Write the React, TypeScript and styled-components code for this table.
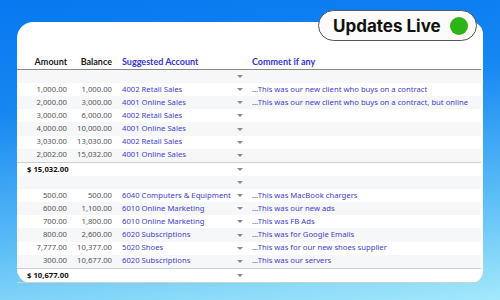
import React from "react";
import styled, { createGlobalStyle } from "styled-components";

const Global = createGlobalStyle`
  html, body { margin: 0; padding: 0; }
  body { width: 500px; height: 300px; overflow: hidden; }
  #root { width: 500px; height: 300px; }
`;

const Page = styled.div`
  position: relative;
  width: 500px;
  height: 300px;
  box-sizing: border-box;
  padding: 22px 17px 17px 17px;
  background: linear-gradient(174deg, #0878f0 0%, #1587f2 32%, #5fc0f7 72%, #a3e9fb 100%);
  font-family: "Noto Sans", "Open Sans", sans-serif;
`;

const Card = styled.div`
  width: 466px;
  height: 261px;
  box-sizing: border-box;
  background: #ffffff;
  border-radius: 16px 12px 12px 14px;
  padding-top: 35px;
  display: flex;
  flex-direction: column;
`;

const Badge = styled.div`
  position: absolute;
  top: 10px;
  left: 318px;
  width: 159px;
  height: 31px;
  box-sizing: border-box;
  border: 1px solid #555;
  border-radius: 16px;
  background: #fbfbfb;
  display: flex;
  align-items: center;
  justify-content: space-between;
  padding: 0 8px 0 14px;
  font-family: "Inter", "Lato", sans-serif;
  font-weight: 700;
  font-size: 17px;
  color: #111;
`;

const Dot = styled.span`
  width: 18px;
  height: 18px;
  border-radius: 50%;
  background: #2eb315;
`;

const Row = styled.div<{ $shade?: boolean; $head?: boolean; $total?: boolean }>`
  display: grid;
  grid-template-columns: 50px 45px 134px 1fr;
  align-items: center;
  height: ${(p) => (p.$head ? "12px" : "13.2px")};
  margin-right: 2px;
  background: ${(p) => (p.$shade ? "#f6f7f9" : "transparent")};
  border-bottom: ${(p) => (p.$head ? "1.5px solid #8a8a8a" : "none")};
  border-top: ${(p) => (p.$total ? "1px solid #cfcfcf" : "none")};
  font-size: 7.7px;
  line-height: 1;
  white-space: nowrap;
`;

const BottomLine = styled.div`
  margin-right: 2px;
  border-top: 1px solid #cfcfcf;
`;

const HeadCell = styled.div<{ $blue?: boolean; $right?: boolean; $pad?: number }>`
  font-family: "Lato", "Open Sans", sans-serif;
  font-weight: 700;
  font-size: 9px;
  color: ${(p) => (p.$blue ? "#3434d8" : "#1a1a1a")};
  text-align: ${(p) => (p.$right ? "right" : "left")};
  padding-left: ${(p) => p.$pad ?? 0}px;
  align-self: start;
`;

const Num = styled.div`
  text-align: right;
  color: #555;
`;

const Total = styled.div`
  grid-column: 1 / span 2;
  padding-left: 10px;
  font-weight: 700;
  color: #111;
`;

const Account = styled.div`
  display: flex;
  align-items: center;
  justify-content: space-between;
  padding-left: 10px;
  padding-right: 3px;
  color: #4141cf;
`;

const Arrow = styled.span`
  width: 0;
  height: 0;
  border-left: 3px solid transparent;
  border-right: 3px solid transparent;
  border-top: 3px solid #8a8a8a;
`;

const Comment = styled.div`
  padding-left: 6px;
  color: #4141cf;
`;

type R = { a?: string; b?: string; acc?: string; c?: string; total?: string };

const rows: R[] = [
  {},
  { a: "1,000.00", b: "1,000.00", acc: "4002 Retail Sales", c: "...This was our new client who buys on a contract" },
  { a: "2,000.00", b: "3,000.00", acc: "4001 Online Sales", c: "...This was our new client who buys on a contract, but online" },
  { a: "3,000.00", b: "6,000.00", acc: "4002 Retail Sales" },
  { a: "4,000.00", b: "10,000.00", acc: "4001 Online Sales" },
  { a: "3,030.00", b: "13,030.00", acc: "4002 Retail Sales" },
  { a: "2,002.00", b: "15,032.00", acc: "4001 Online Sales" },
  { total: "$ 15,032.00" },
  {},
  { a: "500.00", b: "500.00", acc: "6040 Computers & Equipment", c: "...This was MacBook chargers" },
  { a: "600.00", b: "1,100.00", acc: "6010 Online Marketing", c: "...This was our new ads" },
  { a: "700.00", b: "1,800.00", acc: "6010 Online Marketing", c: "...This was FB Ads" },
  { a: "800.00", b: "2,600.00", acc: "6020 Subscriptions", c: "...This was for Google Emails" },
  { a: "7,777.00", b: "10,377.00", acc: "5020 Shoes", c: "...This was for our new shoes supplier" },
  { a: "300.00", b: "10,677.00", acc: "6020 Subscriptions", c: "...This was our servers" },
  { total: "$ 10,677.00" },
];

export default function App() {
  return (
    <>
      <Global />
      <Page>
        <Card>
          <Row $head>
            <HeadCell $right>Amount</HeadCell>
            <HeadCell $right>Balance</HeadCell>
            <HeadCell $blue $pad={10}>Suggested Account</HeadCell>
            <HeadCell $blue $pad={6}>Comment if any</HeadCell>
          </Row>
          {rows.map((r, i) => (
            <Row key={i} $shade={i % 2 === 0} $total={!!r.total}>
              {r.total ? (
                <Total>{r.total}</Total>
              ) : (
                <>
                  <Num>{r.a}</Num>
                  <Num>{r.b}</Num>
                </>
              )}
              <Account>
                <span>{r.acc}</span>
                <Arrow />
              </Account>
              <Comment>{r.c}</Comment>
            </Row>
          ))}
          <BottomLine />
        </Card>
        <Badge>
          <span>Updates Live</span>
          <Dot />
        </Badge>
      </Page>
    </>
  );
}
